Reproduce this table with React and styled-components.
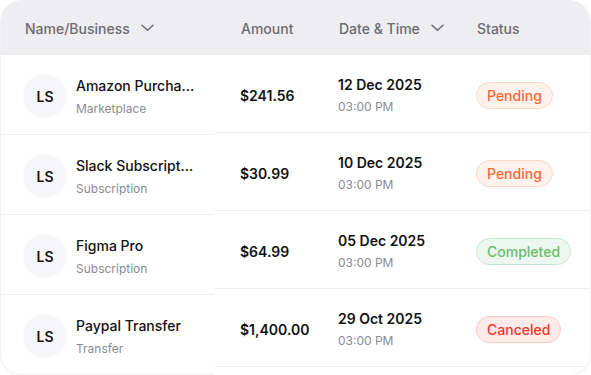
import React from "react";
import styled, { createGlobalStyle } from "styled-components";

const Global = createGlobalStyle`
  * { box-sizing: border-box; }
  html, body { margin: 0; padding: 0; background: #ffffff; }
  body { font-family: Inter, "Noto Sans", sans-serif; color: #121214; }
`;

const Card = styled.div`
  width: 591px;
  border: 1px solid #f1f1f4;
  border-top: none;
  border-radius: 22px;
  overflow: hidden;
  background: #fff;
`;

const Header = styled.div`
  display: grid;
  grid-template-columns: 215px 123px 138px 1fr;
  height: 55px;
  padding-top: 1px;
  align-items: center;
  background: #eeedf0;
  color: #6c6b71;
  font-size: 14px;
  font-weight: 500;
`;

const HeadCell = styled.div`
  display: flex;
  align-items: center;
  gap: 11px;
  padding-left: ${(p) => p.$pl || 0}px;
`;

const Chevron = () => (
  <svg width="13" height="8" viewBox="0 0 13 8" fill="none">
    <path d="M1 1.2 L6.5 6.2 L12 1.2" stroke="#6c6b71" strokeWidth="1.5" strokeLinecap="round" strokeLinejoin="round" />
  </svg>
);

const Body = styled.div`
  display: flex;
`;

const LeftCol = styled.div`
  width: 214px;
  flex: none;
`;

const RightCol = styled.div`
  flex: 1;
`;

const LeftRow = styled.div`
  height: 80px;
  padding: 3px 0 0 22px;
  display: flex;
  align-items: center;
  gap: 9px;
  border-bottom: 1px solid #f0f0f3;
`;

const RightRow = styled.div`
  height: 78px;
  padding-top: 3px;
  display: grid;
  grid-template-columns: 123px 138px 1fr;
  align-items: center;
  border-bottom: 1px solid #f0f0f3;
`;

const Avatar = styled.div`
  width: 44px;
  height: 44px;
  border-radius: 50%;
  background: #f7f6f9;
  display: flex;
  align-items: center;
  justify-content: center;
  font-size: 14px;
  font-weight: 600;
  color: #141416;
  flex: none;
`;

const Stack = styled.div`
  display: flex;
  flex-direction: column;
  gap: ${(p) => p.$gap || 4}px;
  min-width: 0;
`;

const Title = styled.div`
  font-size: 14px;
  line-height: 20px;
  font-weight: ${(p) => p.$weight || 500};
  color: #121214;
  white-space: nowrap;
`;

const Sub = styled.div`
  font-size: 12px;
  line-height: 16px;
  color: #8c8b91;
`;

const Amount = styled.div`
  padding-left: 25px;
  font-size: 14px;
  font-weight: 600;
  color: #121214;
`;

const Pill = styled.span`
  justify-self: start;
  display: inline-flex;
  align-items: center;
  height: 27px;
  padding: 0 10px;
  border-radius: 14px;
  font-size: 14px;
  font-weight: 500;
  color: ${(p) => p.$c.fg};
  background: ${(p) => p.$c.bg};
  border: 1px solid ${(p) => p.$c.bd};
`;

const tones = {
  Pending: { fg: "#f4693a", bg: "#fff2ec", bd: "#fcd8c6" },
  Completed: { fg: "#6cbd6c", bg: "#ebf7ef", bd: "#c3e6d0" },
  Canceled: { fg: "#f2362a", bg: "#ffebea", bd: "#f9c6c2" },
};

const rows = [
  { name: "Amazon Purcha…", cat: "Marketplace", amount: "$241.56", date: "12 Dec 2025", status: "Pending" },
  { name: "Slack Subscript…", cat: "Subscription", amount: "$30.99", date: "10 Dec 2025", status: "Pending" },
  { name: "Figma Pro", cat: "Subscription", amount: "$64.99", date: "05 Dec 2025", status: "Completed" },
  { name: "Paypal Transfer", cat: "Transfer", amount: "$1,400.00", date: "29 Oct 2025", status: "Canceled" },
];

export default function App() {
  return (
    <>
      <Global />
      <Card>
        <Header>
          <HeadCell $pl={24}>
            Name/Business <Chevron />
          </HeadCell>
          <HeadCell $pl={25}>Amount</HeadCell>
          <HeadCell>
            Date &amp; Time <Chevron />
          </HeadCell>
          <HeadCell>Status</HeadCell>
        </Header>
        <Body>
          <LeftCol>
            {rows.map((r) => (
              <LeftRow key={r.name}>
                <Avatar>LS</Avatar>
                <Stack $gap={5}>
                  <Title>{r.name}</Title>
                  <Sub>{r.cat}</Sub>
                </Stack>
              </LeftRow>
            ))}
          </LeftCol>
          <RightCol>
            {rows.map((r) => (
              <RightRow key={r.name}>
                <Amount>{r.amount}</Amount>
                <Stack $gap={4}>
                  <Title $weight={600}>{r.date}</Title>
                  <Sub>03:00 PM</Sub>
                </Stack>
                <Pill $c={tones[r.status]}>{r.status}</Pill>
              </RightRow>
            ))}
          </RightCol>
        </Body>
      </Card>
    </>
  );
}
